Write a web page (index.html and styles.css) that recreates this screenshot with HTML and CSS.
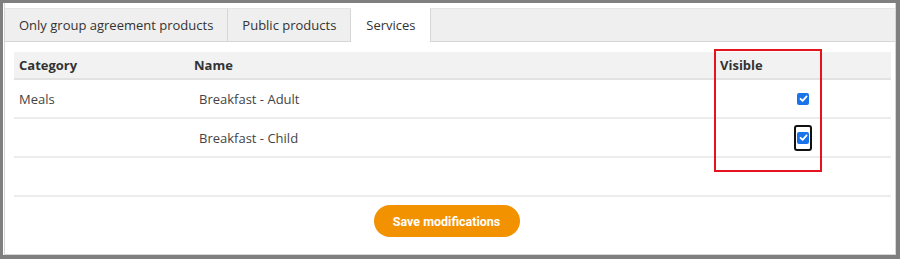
FILE: index.html
```html
<!DOCTYPE html>
<html>
<head>
<meta charset="utf-8">
<link rel="stylesheet" href="styles.css">
</head>
<body>
<div class="frame">
  <div class="panel">
    <div class="tabs">
      <div class="tab">Only group agreement products</div>
      <div class="tab">Public products</div>
      <div class="tab active">Services</div>
    </div>
    <div class="content">
      <div class="table">
        <div class="row head">
          <div class="c-cat">Category</div>
          <div class="c-name">Name</div>
          <div class="c-vis">Visible</div>
        </div>
        <div class="row">
          <div class="c-cat">Meals</div>
          <div class="c-name">Breakfast - Adult</div>
          <div class="c-vis"><span class="check"><svg width="11" height="11" viewBox="0 0 11 11"><path d="M2.5 5.8 L4.6 7.8 L8.6 3.4" fill="none" stroke="#fff" stroke-width="1.8" stroke-linecap="round" stroke-linejoin="round"/></svg></span></div>
        </div>
        <div class="row">
          <div class="c-cat"></div>
          <div class="c-name">Breakfast - Child</div>
          <div class="c-vis"><span class="focus"><span class="check"><svg width="11" height="11" viewBox="0 0 11 11"><path d="M2.5 5.8 L4.6 7.8 L8.6 3.4" fill="none" stroke="#fff" stroke-width="1.8" stroke-linecap="round" stroke-linejoin="round"/></svg></span></span></div>
        </div>
        <div class="row empty"></div>
      </div>
      <div class="actions">
        <button class="save">Save modifications</button>
      </div>
    </div>
    <div class="highlight"></div>
  </div>
</div>
</body>
</html>
```
FILE: styles.css
```css
* { box-sizing: border-box; }
html, body { margin: 0; padding: 0; }
body {
  width: 900px;
  height: 259px;
  background: #7f7f7f;
  padding: 3px 4px 4px 3px;
  font-family: "Open Sans", "Liberation Sans", sans-serif;
  font-size: 13px;
  color: #444;
}
.frame {
  background: #fff;
  height: 252px;
  padding-left: 1px;
}
.panel {
  position: relative;
  height: 252px;
  border-left: 1px solid #d6d6d6;
  border-right: 1px solid #d6d6d6;
  border-bottom: 1px solid #d6d6d6;
  padding-top: 5px;
}
.tabs {
  display: flex;
  height: 34px;
  background: #efefef;
  border-top: 1px solid #e4e4e4;
  border-bottom: 1px solid #d6d6d6;
}
.tab {
  padding: 0 14px;
  line-height: 32px;
  border-right: 1px solid #d6d6d6;
  color: #333;
}
.tab.active {
  background: #fff;
  height: 34px;
  margin-top: -1px;
  line-height: 34px;
  padding: 0 14px 0 15px;
}
.content {
  padding: 10px 4px 0 9px;
}
.row {
  display: flex;
  align-items: center;
  height: 39px;
  border-bottom: 2px solid #ececec;
}
.row.head {
  height: 28px;
  background: #f2f2f2;
  border-bottom: 2px solid #e2e2e2;
  font-weight: 700;
  color: #333;
}
.c-cat { width: 175px; padding-left: 5px; }
.c-name { width: 526px; padding-left: 5px; }
.row:not(.head) .c-name { padding-left: 10px; }
.c-vis { flex: 1; padding-left: 5px; }
.row:not(.head) .c-vis { display: flex; justify-content: flex-end; padding-right: 82px; }
.check {
  display: inline-flex;
  width: 12px;
  height: 12px;
  background: #1a73e8;
  border-radius: 2px;
  align-items: center;
  justify-content: center;
}
.check svg { display: block; }
.focus {
  display: inline-flex;
  align-items: center;
  justify-content: center;
  width: 18px;
  height: 26px;
  border: 2px solid #111;
  border-radius: 3px;
  margin-right: -3px;
}
.actions {
  display: flex;
  justify-content: center;
  padding-top: 8px;
}
.save {
  font-family: Roboto, "Liberation Sans", sans-serif;
  font-weight: 700;
  font-size: 12.5px;
  color: #fff;
  background: #f39200;
  border: none;
  border-radius: 17px;
  height: 32px;
  width: 146px;
  margin-right: 12px;
}
.highlight {
  position: absolute;
  left: 709px;
  top: 46px;
  width: 108px;
  height: 123px;
  border: 2px solid #e3141b;
}
```
